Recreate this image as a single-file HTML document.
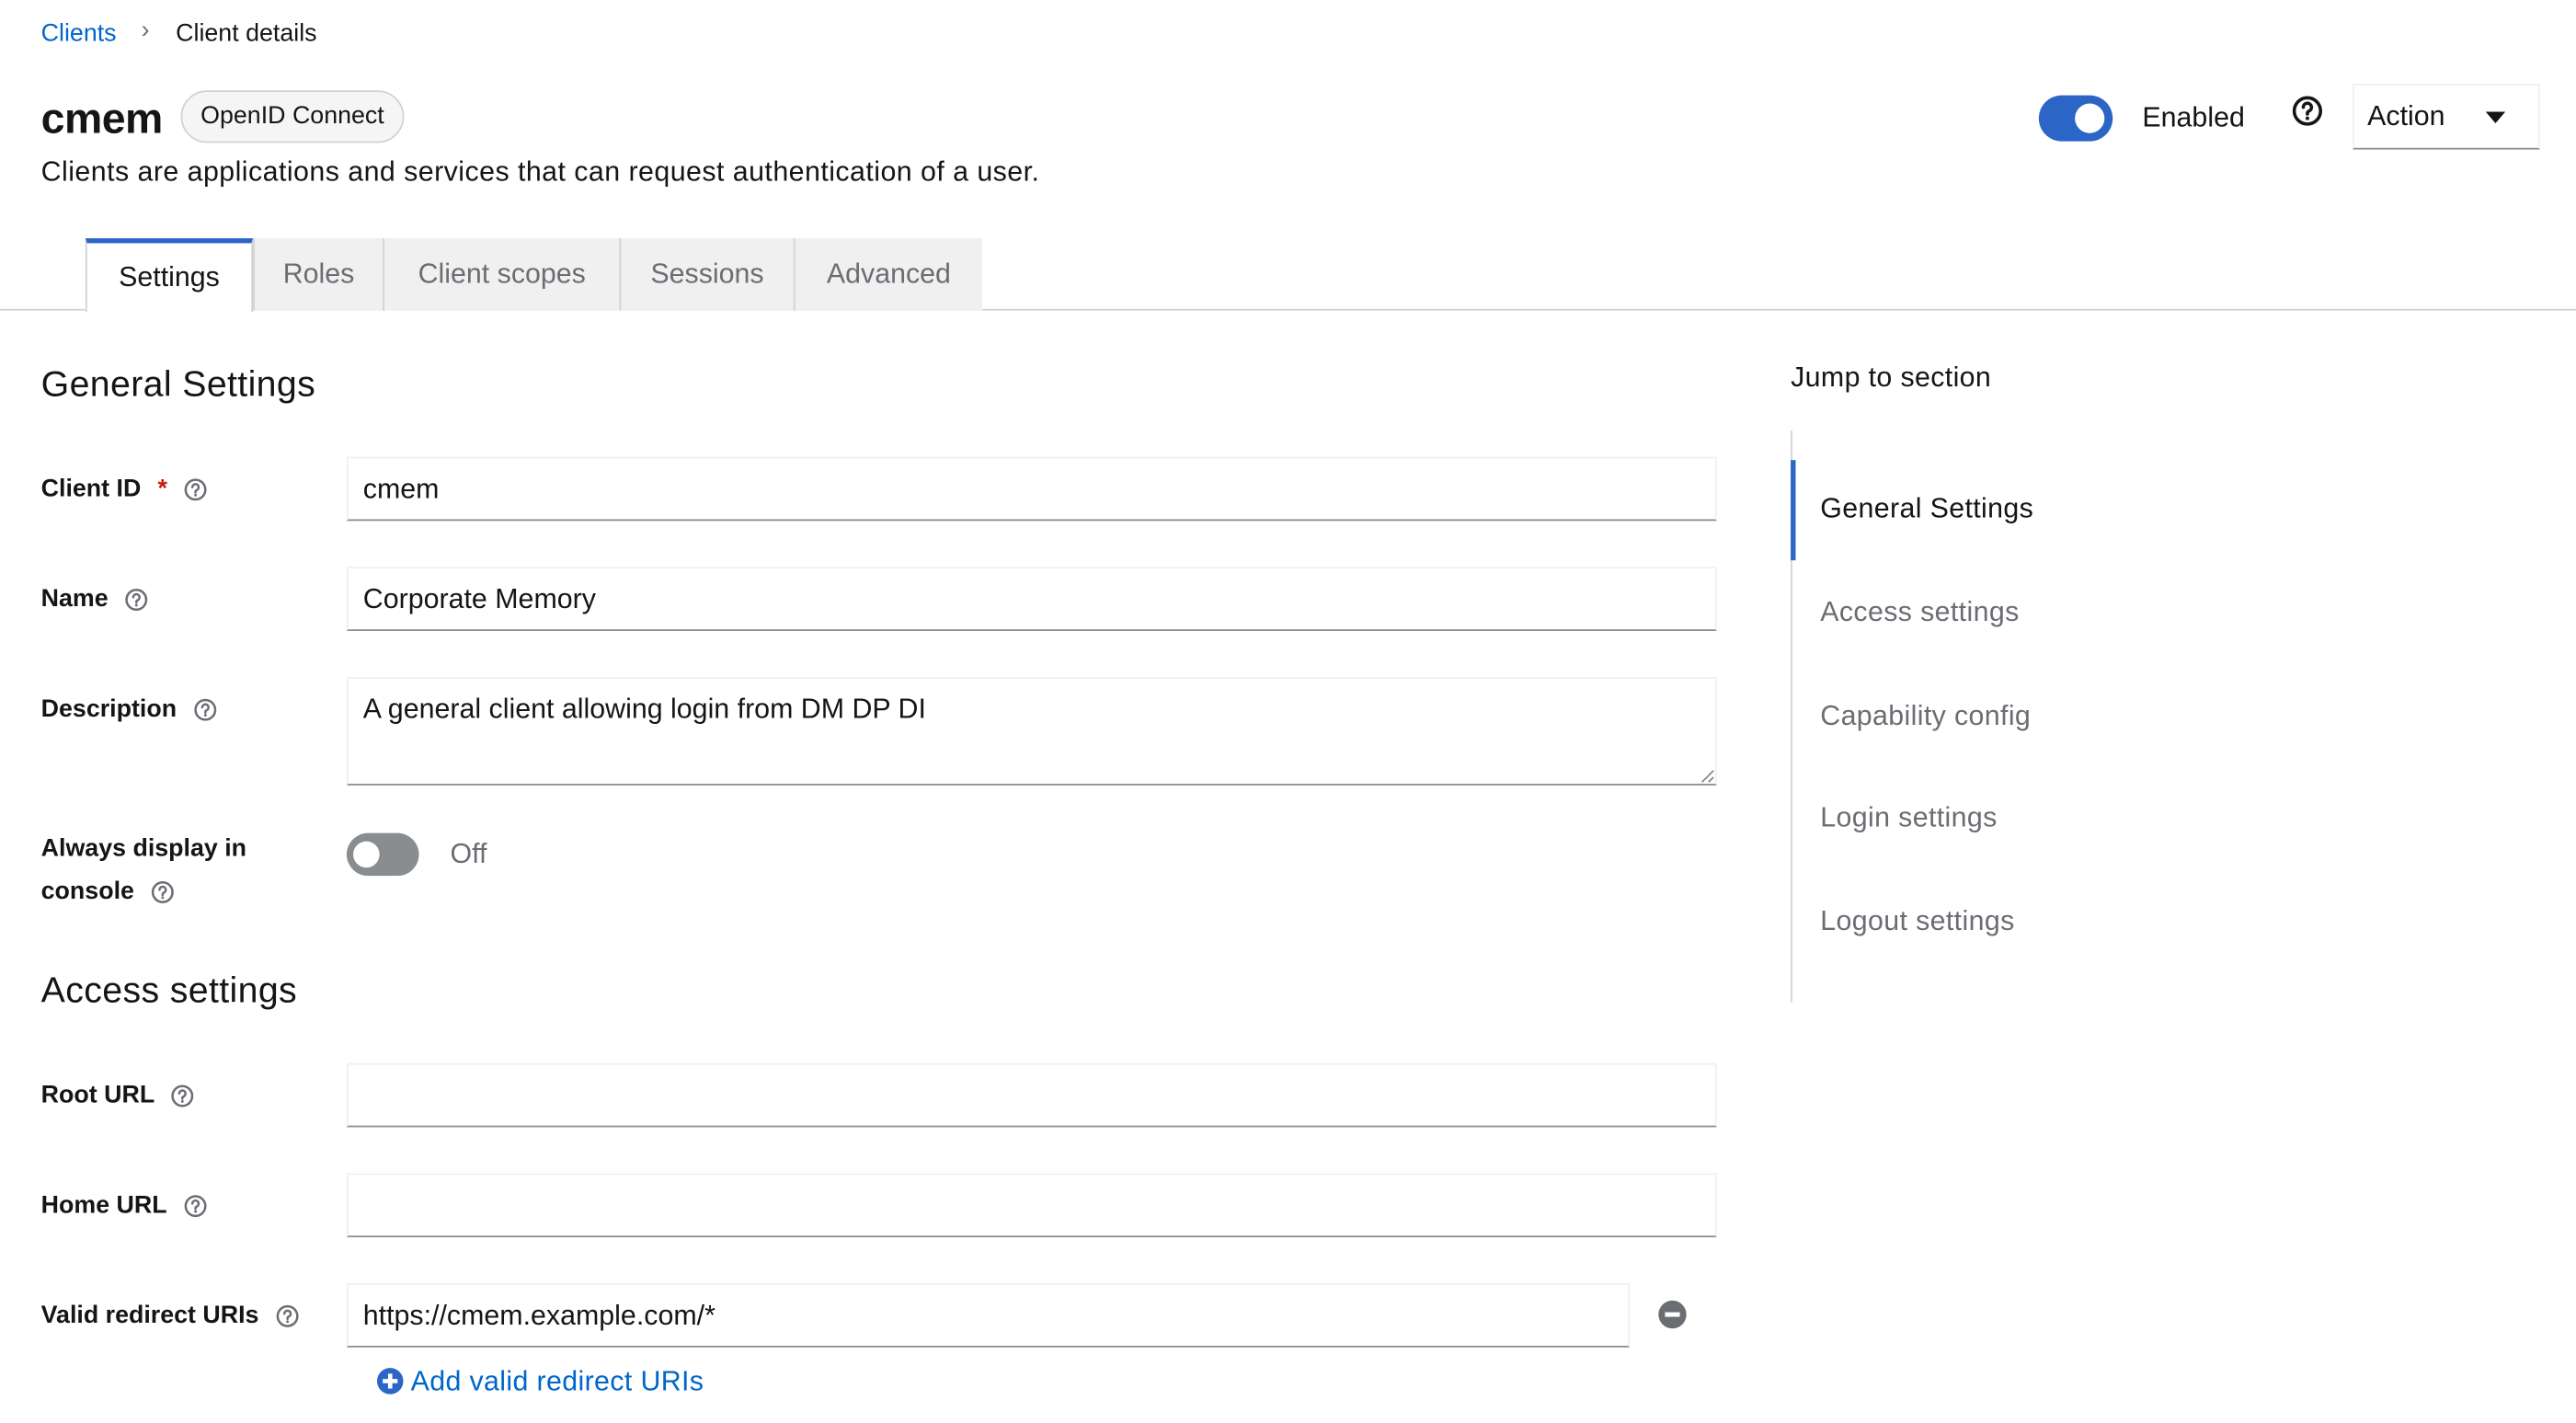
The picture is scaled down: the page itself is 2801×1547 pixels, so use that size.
<!DOCTYPE html>
<html><head><meta charset="utf-8"><style>
html,body{margin:0;padding:0;background:#fff;overflow:hidden}
body{width:2801px;height:1546px}
#w{position:absolute;left:0;top:0;width:1568px;height:866px;transform:scale(1.78635);transform-origin:0 0;font-family:"Liberation Sans",sans-serif;color:#151515}
.a{position:absolute;white-space:nowrap}
.lbl{font-size:15px;font-weight:bold;line-height:18px}
.inp{position:absolute;left:211px;width:834px;border:1px solid #f0f0f0;border-bottom:1px solid #8a8d90;box-sizing:border-box;font-size:17px;padding-left:9px}
.tab{position:absolute;top:145px;height:44px;background:#f0f0f0;border-left:1px solid #d2d2d2;box-sizing:border-box;font-size:17px;color:#6a6e73;text-align:center;line-height:44px}
.jl{position:absolute;left:1108px;font-size:17px;color:#6a6e73;letter-spacing:0.2px}
.h{display:inline-block;vertical-align:middle}
</style></head><body><div id="w">
<svg width="0" height="0" style="position:absolute"><defs><g id="q"><circle cx="7" cy="7" r="6" fill="none" stroke="#6a6e73" stroke-width="1.4"/><path d="M5.1 5.5a1.9 1.9 0 1 1 2.6 1.8c-.5.2-.7.5-.7 1v.4" fill="none" stroke="#6a6e73" stroke-width="1.4" stroke-linecap="round"/><circle cx="7" cy="10.3" r=".8" fill="#6a6e73"/></g></defs></svg>

<div class="a" style="left:25px;top:12px;font-size:15px;color:#0066cc">Clients</div>
<div class="a" style="left:86px;top:10px;font-size:15px;color:#6a6e73">&#8250;</div>
<div class="a" style="left:107px;top:12px;font-size:15px">Client details</div>

<div class="a" style="left:25px;top:57px;font-size:26px;font-weight:bold;letter-spacing:-0.3px">cmem</div>
<div class="a" style="left:110px;top:55px;width:136px;height:32px;box-sizing:border-box;border:1px solid #d2d2d2;border-radius:16px;background:#f5f5f5;font-size:15px;line-height:30px;text-align:center">OpenID Connect</div>
<div class="a" style="left:25px;top:95px;font-size:17px;letter-spacing:0.25px">Clients are applications and services that can request authentication of a user.</div>

<div class="a" style="left:1241px;top:58px;width:45px;height:28px;border-radius:14px;background:#2b66c6"></div>
<div class="a" style="left:1263px;top:63px;width:18px;height:18px;border-radius:9px;background:#fff"></div>
<div class="a" style="left:1304px;top:62px;font-size:17px">Enabled</div>
<svg class="a" style="left:1395px;top:58px" width="19" height="19" viewBox="0 0 19 19"><circle cx="9.5" cy="9.5" r="8" fill="none" stroke="#151515" stroke-width="2"/><path d="M7 7.3a2.5 2.5 0 1 1 3.5 2.3c-.7.3-1 .7-1 1.3v.5" fill="none" stroke="#151515" stroke-width="2" stroke-linecap="round"/><circle cx="9.5" cy="14" r="1.1" fill="#151515"/></svg>
<div class="a" style="left:1432px;top:51px;width:114px;height:40px;box-sizing:border-box;border:1px solid #f0f0f0;border-bottom:1px solid #8a8d90"></div>
<div class="a" style="left:1441px;top:61px;font-size:17px">Action</div>
<div class="a" style="left:1513px;top:68px;width:0;height:0;border-left:6px solid transparent;border-right:6px solid transparent;border-top:7px solid #151515"></div>

<div class="a" style="left:0;top:188px;width:1568px;height:1px;background:#d2d2d2"></div>
<div class="tab" style="left:52px;width:102px;background:#fff;border-top:3px solid #2b66c6;color:#151515;line-height:42px;border-left:1px solid #d2d2d2;border-right:1px solid #d2d2d2;height:45px">Settings</div>
<div class="tab" style="left:154px;width:79px">Roles</div>
<div class="tab" style="left:233px;width:144px">Client scopes</div>
<div class="tab" style="left:377px;width:106px">Sessions</div>
<div class="tab" style="left:483px;width:115px">Advanced</div>

<div class="a" style="left:25px;top:221px;font-size:22px;letter-spacing:0.2px">General Settings</div>
<div class="a lbl" style="left:25px;top:289px">Client ID <span style="color:#c9190b;margin-left:6px">*</span> <svg class="h" width="14" height="14" style="margin-left:6px"><use href="#q"/></svg></div>
<div class="inp" style="top:278px;height:39px;line-height:38px">cmem</div>
<div class="a lbl" style="left:25px;top:356px">Name <svg class="h" width="14" height="14" style="margin-left:6px"><use href="#q"/></svg></div>
<div class="inp" style="top:345px;height:39px;line-height:38px">Corporate Memory</div>
<div class="a lbl" style="left:25px;top:423px">Description <svg class="h" width="14" height="14" style="margin-left:6px"><use href="#q"/></svg></div>
<div class="inp" style="top:412px;height:66px;line-height:38px;padding-top:0">A general client allowing login from DM DP DI</div>
<svg class="a" style="left:1035px;top:468px" width="9" height="9"><path d="M1 8L8 1M5 8L8 5" stroke="#888" stroke-width="1"/></svg>
<div class="a lbl" style="left:25px;top:504px;line-height:26px;white-space:normal;width:150px">Always display in<br>console <svg class="h" width="14" height="14" style="margin-left:6px"><use href="#q"/></svg></div>
<div class="a" style="left:211px;top:507px;width:44px;height:26px;border-radius:13px;background:#8a8d90"></div>
<div class="a" style="left:215px;top:512px;width:16px;height:16px;border-radius:8px;background:#fff"></div>
<div class="a" style="left:274px;top:510px;font-size:17px;color:#6a6e73">Off</div>

<div class="a" style="left:25px;top:590px;font-size:22px;letter-spacing:0.2px">Access settings</div>
<div class="a lbl" style="left:25px;top:658px">Root URL <svg class="h" width="14" height="14" style="margin-left:6px"><use href="#q"/></svg></div>
<div class="inp" style="top:647px;height:39px"></div>
<div class="a lbl" style="left:25px;top:725px">Home URL <svg class="h" width="14" height="14" style="margin-left:6px"><use href="#q"/></svg></div>
<div class="inp" style="top:714px;height:39px"></div>
<div class="a lbl" style="left:25px;top:792px">Valid redirect URIs <svg class="h" width="14" height="14" style="margin-left:6px"><use href="#q"/></svg></div>
<div class="inp" style="top:781px;height:39px;line-height:38px;width:781px">https://cmem.example.com/*</div>
<svg class="a" style="left:1009px;top:791px" width="18" height="18"><circle cx="9" cy="9" r="8.5" fill="#6a6e73"/><rect x="4.5" y="7.6" width="9" height="2.8" fill="#fff"/></svg>
<svg class="a" style="left:229px;top:832px" width="17" height="17"><circle cx="8.5" cy="8.5" r="8" fill="#2b66c6"/><path d="M8.5 4v9M4 8.5h9" stroke="#fff" stroke-width="2.6"/></svg>
<div class="a" style="left:250px;top:831px;font-size:17px;color:#0066cc;letter-spacing:0.2px">Add valid redirect URIs</div>

<div class="a" style="left:1090px;top:220px;font-size:17px;letter-spacing:0.2px">Jump to section</div>
<div class="a" style="left:1090px;top:262px;width:1px;height:348px;background:#d2d2d2"></div>
<div class="a" style="left:1090px;top:280px;width:3px;height:61px;background:#2b66c6"></div>
<div class="jl" style="top:300px;color:#151515">General Settings</div>
<div class="jl" style="top:363px">Access settings</div>
<div class="jl" style="top:426px">Capability config</div>
<div class="jl" style="top:488px">Login settings</div>
<div class="jl" style="top:551px">Logout settings</div>
</div></body></html>
